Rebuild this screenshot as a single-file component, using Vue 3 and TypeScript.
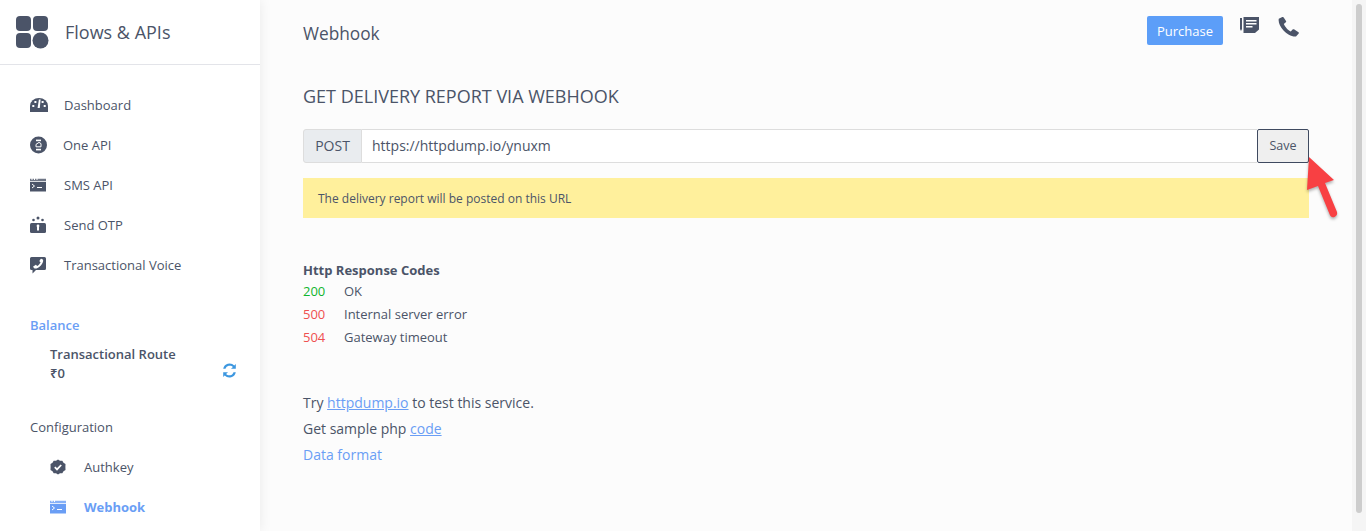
<script setup lang="ts">
interface NavItem { label: string; icon: string }
const navItems: NavItem[] = [
  { label: 'Dashboard', icon: 'gauge' },
  { label: 'One API', icon: 'api' },
  { label: 'SMS API', icon: 'terminal' },
  { label: 'Send OTP', icon: 'otp' },
  { label: 'Transactional Voice', icon: 'voice' },
]
const codes = [
  { code: '200', text: 'OK', tone: 'ok' },
  { code: '500', text: 'Internal server error', tone: 'bad' },
  { code: '504', text: 'Gateway timeout', tone: 'bad' },
]
</script>

<template>
  <div class="page">
    <aside class="sidebar">
      <div class="brand">
        <svg class="logo" width="33" height="33" viewBox="0 0 33 33">
          <rect x="0" y="0" width="15" height="15" rx="4" />
          <rect x="17" y="0" width="15" height="15" rx="4" />
          <rect x="0" y="17" width="15" height="15" rx="4" />
          <circle cx="24.5" cy="24.5" r="8" />
        </svg>
        <span class="brand-name">Flows &amp; APIs</span>
      </div>

      <nav class="nav">
        <a v-for="item in navItems" :key="item.label" class="nav-item" :class="'is-' + item.icon" href="#">
          <svg class="nav-icon" width="18" height="18" viewBox="0 0 18 18">
            <template v-if="item.icon === 'gauge'">
              <path d="M0 16V10a9 8 0 0 1 18 0v6z" />
              <g fill="#fff">
                <path d="M10.600 3.600 9.800 12H7.600L8.900 3.400z" />
                <rect x="2.300" y="9" width="2" height="2" />
                <rect x="4.400" y="5" width="2" height="2" />
                <rect x="11.600" y="5" width="2" height="2" />
                <rect x="13.700" y="9" width="2" height="2" />
              </g>
            </template>
            <template v-else-if="item.icon === 'api'">
              <circle cx="8.500" cy="9" r="8.500" />
              <g fill="#fff">
                <rect x="6" y="3.600" width="5" height="1.600" />
                <rect x="6" y="12.800" width="5" height="1.600" />
              </g>
              <path d="M6 10.800V8.400l3-2 2 1.200v3.200z" fill="none" stroke="#fff" stroke-width="1" />
            </template>
            <template v-else-if="item.icon === 'terminal'">
              <path d="M0 4h16v11.500H0z" />
              <g fill="#fff">
                <rect x="0" y="4.800" width="16" height="1" />
                <rect x="7" y="11" width="5" height="1" />
              </g>
              <path d="m2 8 2.500 2L2 12" fill="none" stroke="#fff" stroke-width="1" />
              <g fill="#4b5468">
                <rect x="0" y="2.800" width="1.500" height="1" />
                <rect x="2.500" y="2.800" width="1.500" height="1" />
                <rect x="5" y="2.800" width="1.500" height="1" />
                <rect x="7.500" y="2.800" width="8.500" height="1" />
              </g>
            </template>
            <template v-else-if="item.icon === 'otp'">
              <rect x="0" y="7" width="16" height="10" rx="1.500" />
              <rect x="7" y="10" width="2" height="4.500" fill="#fff" />
              <circle cx="8" cy="10" r="1.400" fill="#fff" />
              <circle cx="8" cy="2" r="1.500" />
              <circle cx="3.500" cy="4" r="1.300" />
              <circle cx="12.500" cy="4" r="1.300" />
            </template>
            <template v-else>
              <path d="M1.500 1h13A1.500 1.500 0 0 1 16 2.500v10a1.500 1.500 0 0 1-1.500 1.500H6l-3.500 3.500V14h-1A1.500 1.500 0 0 1 0 12.500v-10A1.500 1.500 0 0 1 1.500 1z" />
              <path transform="translate(13.500 2.800) scale(-.5 .5)" fill="#fff" d="M4.300 0 .8 1.700C0 5 2 9.500 5.300 13.300c3.500 3.800 8.500 6.700 12.700 6.200l2.700-3c.3-.5.2-1-.2-1.300L16 12.300c-.5-.3-1-.2-1.400.2l-1.800 2c-2.600-1.100-5.800-4.600-7-7.500l2-1.700c.4-.4.500-.9.2-1.400L5.700.5C5.300 0 4.800-.1 4.300 0z" />
            </template>
          </svg>
          <span>{{ item.label }}</span>
        </a>
      </nav>

      <section class="balance">
        <h4 class="balance-title">Balance</h4>
        <div class="balance-row">
          <div>
            <div class="route">Transactional Route</div>
            <div class="amount">₹0</div>
          </div>
          <svg class="refresh" width="15" height="15" viewBox="0 0 15 15" fill="#3c97e0">
            <path d="M13.800 1v4.800H9L10.900 4A4.400 4.400 0 0 0 3.500 5.800H1.200A6.500 6.500 0 0 1 12.300 2.500z" />
            <path d="M1.200 14V9.200H6L4.100 11a4.400 4.400 0 0 0 7.400-1.800h2.300A6.500 6.500 0 0 1 2.700 12.500z" />
          </svg>
        </div>
      </section>

      <section class="config">
        <h4 class="config-title">Configuration</h4>
        <a class="sub-item" href="#">
          <svg class="nav-icon" width="16" height="16" viewBox="0 0 16 16">
            <path d="M8 .5 10 1.700l2.300.1 1.200 2 2 1.200L15.400 8l.1 3-2 1.200-1.200 2-2.300.1L8 15.500l-2-1.200-2.300-.1-1.200-2-2-1.200L.6 8 .5 5l2-1.200 1.200-2 2.300-.1z" />
            <path d="m4.800 8.200 2.200 2.200 4.200-4.400" fill="none" stroke="#fff" stroke-width="1.800" />
          </svg>
          <span>Authkey</span>
        </a>
        <a class="sub-item active" href="#">
          <svg class="nav-icon" width="16" height="16" viewBox="0 0 16 16">
            <path d="M0 3h16v11.500H0z" />
            <rect x="0" y="3.800" width="16" height="1" fill="#fff" />
            <rect x="7" y="10" width="5" height="1" fill="#fff" />
            <path d="m2 7 2.500 2L2 11" fill="none" stroke="#fff" stroke-width="1" />
            <g>
              <rect x="0" y="1.800" width="1.500" height="1" />
              <rect x="2.500" y="1.800" width="1.500" height="1" />
              <rect x="5" y="1.800" width="11" height="1" />
            </g>
          </svg>
          <span>Webhook</span>
        </a>
      </section>
    </aside>

    <main class="main">
      <header class="topbar">
        <h1 class="page-title">Webhook</h1>
        <div class="actions">
          <button class="purchase" type="button">Purchase</button>
          <svg class="doc" width="19" height="18" viewBox="0 0 19 18">
            <rect x="0" y="1" width="2" height="11" />
            <path d="M0 12h2l-1 2z" />
            <path d="M3.500 0H19v12.500L15 16H3.500z" />
            <g fill="#fff">
              <rect x="6" y="3" width="10.500" height="1.500" />
              <rect x="6" y="6" width="10.500" height="1.500" />
              <rect x="6" y="9" width="6.500" height="1.500" />
            </g>
          </svg>
          <svg class="phone" width="21" height="20" viewBox="0 0 21 20">
            <path d="M4.300 0 .8 1.700C0 5 2 9.500 5.300 13.300c3.500 3.800 8.500 6.700 12.700 6.200l2.700-3c.3-.5.2-1-.2-1.300L16 12.300c-.5-.3-1-.2-1.400.2l-1.800 2c-2.600-1.100-5.800-4.600-7-7.500l2-1.700c.4-.4.500-.9.2-1.400L5.700.5C5.300 0 4.800-.1 4.300 0z" />
          </svg>
        </div>
      </header>

      <h2 class="section-title">GET DELIVERY REPORT VIA WEBHOOK</h2>

      <form class="url-group" @submit.prevent>
        <span class="addon">POST</span>
        <input class="url-input" type="text" value="https://httpdump.io/ynuxm" />
        <button class="save" type="submit">Save</button>
        <svg class="pointer" width="36" height="66" viewBox="0 0 36 66">
          <path d="M4 2 29 25l-9 3 12 29c.6 2-.4 4-2.500 5-2.300.8-3.800 0-4.800-2.500L13 31 2 35z" />
        </svg>
      </form>

      <div class="notice">The delivery report will be posted on this URL</div>

      <section class="codes">
        <h3 class="codes-title">Http Response Codes</h3>
        <div v-for="row in codes" :key="row.code" class="code-row">
          <span class="code" :class="row.tone">{{ row.code }}</span>
          <span>{{ row.text }}</span>
        </div>
      </section>

      <section class="links">
        <p>Try <a class="link" href="#">httpdump.io</a> to test this service.</p>
        <p>Get sample php <a class="link" href="#">code</a></p>
        <p><a class="link plain" href="#">Data format</a></p>
      </section>
    </main>

    <div class="scrollbar"><div class="thumb"></div></div>
  </div>
</template>

<style>
html, body { margin: 0; height: 100%; overflow: hidden; }
</style>

<style scoped>
.page {
  display: flex;
  width: 1366px;
  height: 531px;
  overflow: hidden;
  background: #fcfcfc;
  color: #4b5468;
  font-family: "Open Sans", "Noto Sans", sans-serif;
  font-size: 13px;
}
.sidebar {
  flex: 0 0 260px;
  height: 531px;
  overflow: hidden;
  background: #fff;
  box-shadow: 0 0 12px rgba(0, 0, 0, .08);
  position: relative;
}
.brand {
  display: flex;
  align-items: center;
  height: 64px;
  padding-left: 16px;
  border-bottom: 1px solid #e3e4e9;
}
.logo { fill: #4b5468; }
.brand-name { margin-left: 16px; font-size: 18px; }
.nav { padding-top: 20px; }
.nav-item {
  display: flex;
  align-items: center;
  height: 40px;
  padding-left: 30px;
  color: inherit;
  text-decoration: none;
}
.nav-item span { margin-left: 16px; }
.nav-item.is-api span { margin-left: 15px; }
.nav-icon { fill: currentColor; color: #4b5468; flex: none; }
.balance { padding: 30px 23px 0 30px; }
.balance-title {
  margin: 0;
  font-size: 13px;
  line-height: 20px;
  font-weight: 600;
  color: #6a9ef5;
}
.balance-row {
  display: flex;
  justify-content: space-between;
  align-items: center;
  padding: 10px 0 0 20px;
}
.route, .amount { font-weight: 600; line-height: 19px; }
.refresh { display: block; margin-top: 12px; }
.config { padding: 34px 0 0 30px; }
.config-title { margin: 0; font-size: 13px; line-height: 20px; font-weight: 400; }
.sub-item {
  display: flex;
  align-items: center;
  height: 40px;
  padding-left: 20px;
  color: inherit;
  text-decoration: none;
}
.config-title + .sub-item { margin-top: 10px; }
.sub-item span { margin-left: 18px; }
.sub-item.active { color: #6a9ef5; font-weight: 700; }
.sub-item.active .nav-icon { color: #6a9ef5; }

.main { flex: 1; padding: 0 43px; min-width: 0; }
.topbar {
  display: flex;
  justify-content: space-between;
  align-items: flex-start;
  height: 78px;
}
.page-title { margin: 24px 0 0; font-size: 17.3px; line-height: 20px; font-weight: 400; }
.actions { display: flex; align-items: flex-start; padding: 16px 10px 0 0; }
.purchase {
  width: 76px;
  height: 29px;
  padding: 0;
  border: 0;
  border-radius: 2px;
  background: #5c9ef8;
  color: #fff;
  font: 400 13px "Open Sans", sans-serif;
}
.doc { fill: #4b5468; margin: 1px 0 0 17px; }
.phone { fill: #4b5468; margin: 1px 0 0 19px; }
.section-title { margin: 0; font-size: 18px; line-height: 24px; font-weight: 400; padding-top: 6px; padding-bottom: 1px; }
.url-group {
  position: relative;
  display: flex;
  height: 34px;
  margin-top: 20px;
  box-sizing: border-box;
}
.addon {
  flex: 0 0 59px;
  box-sizing: border-box;
  display: flex;
  align-items: center;
  justify-content: center;
  padding-bottom: 2px;
  background: #e9ecef;
  border: 1px solid #ddd;
  border-radius: 3px 0 0 3px;
  font-size: 14px;
}
.url-input {
  flex: 1;
  min-width: 0;
  box-sizing: border-box;
  height: 34px;
  padding: 0 10px 2px;
  border: 1px solid #ddd;
  border-width: 1px 0;
  background: #fff;
  color: #4b5468;
  font: 400 14px "Open Sans", sans-serif;
  outline: none;
}
.save {
  flex: 0 0 52px;
  box-sizing: border-box;
  border: 1px solid #3f4a60;
  border-radius: 2px;
  background: #efefef;
  color: #4b5468;
  font: 400 12.500px "Open Sans", sans-serif;
  padding: 0 0 2px;
}
.pointer {
  position: absolute;
  left: 1002px;
  top: 26px;
  fill: #f84043;
  filter: drop-shadow(0 2px 1.500px rgba(0, 0, 0, .3));
}
.notice {
  height: 40px;
  margin-top: 15px;
  padding-left: 15px;
  display: flex;
  align-items: center;
  background: #fff09c;
  font-size: 12px;
}
.codes { margin-top: 43px; }
.codes-title { margin: 0; font-size: 13px; line-height: 19px; font-weight: 700; }
.code-row { display: flex; height: 23px; line-height: 23px; }
.code { flex: 0 0 41px; }
.code.ok { color: #10b52e; }
.code.bad { color: #ef5050; }
.links { margin-top: 41px; font-size: 14px; line-height: 26px; }
.links p { margin: 0; }
.link { color: #6a9ef5; text-decoration: underline; }
.link.plain { text-decoration: none; }

.scrollbar {
  flex: 0 0 14px;
  box-sizing: border-box;
  padding: 4px 4px 0;
  background: #f5f5f5;
}
.thumb { width: 6px; height: 509px; border-radius: 3px; background: #cdcdcd; }
</style>
